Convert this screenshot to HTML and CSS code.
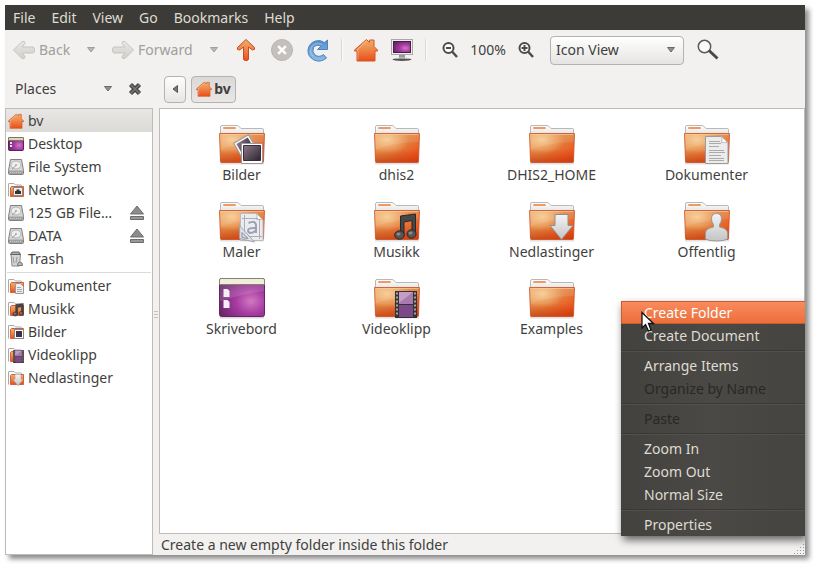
FILE: index.html
```
<!DOCTYPE html>
<html lang="en">
<head>
<meta charset="utf-8">
<title>bv - File Browser</title>
<link rel="stylesheet" href="styles.css">
</head>
<body>
<svg class="defs" width="0" height="0" aria-hidden="true">
  <defs>
    <linearGradient id="gFolder" x1="0" y1="0" x2="1" y2="1"><stop offset="0" stop-color="#eda35d"/><stop offset=".5" stop-color="#e27f3e"/><stop offset=".85" stop-color="#ee4e1a"/><stop offset="1" stop-color="#dc4514"/></linearGradient>
    <radialGradient id="gGlow" cx=".28" cy=".22" r=".5"><stop offset="0" stop-color="#f8d59c" stop-opacity=".85"/><stop offset="1" stop-color="#f8c58c" stop-opacity="0"/></radialGradient>
    <linearGradient id="gBase" x1="0" y1="0" x2="0" y2="1"><stop offset=".55" stop-color="#c8400c" stop-opacity="0"/><stop offset="1" stop-color="#c23b0c" stop-opacity=".7"/></linearGradient>
    <linearGradient id="gOrange" x1="0" y1="0" x2="0" y2="1"><stop offset="0" stop-color="#eeb070"/><stop offset=".5" stop-color="#ee8345"/><stop offset="1" stop-color="#ea4d1b"/></linearGradient>
    <linearGradient id="gTab" x1="0" y1="0" x2="0" y2="1"><stop offset="0" stop-color="#fff"/><stop offset="1" stop-color="#e4e4e4"/></linearGradient>
    <linearGradient id="gGrey" x1="0" y1="0" x2="0" y2="1"><stop offset="0" stop-color="#f4f4f4"/><stop offset="1" stop-color="#c4c4c4"/></linearGradient>
    <linearGradient id="gDull" x1="0" y1="0" x2="0" y2="1"><stop offset="0" stop-color="#e9e7e5"/><stop offset="1" stop-color="#d2cfcc"/></linearGradient>
    <linearGradient id="gPhoto" x1="0" y1="0" x2="1" y2="1"><stop offset="0" stop-color="#8d7888"/><stop offset="1" stop-color="#2c2431"/></linearGradient>
    <radialGradient id="gPurple" cx=".7" cy=".6" r=".75"><stop offset="0" stop-color="#d278c0"/><stop offset=".45" stop-color="#a63ba2"/><stop offset="1" stop-color="#672665"/></radialGradient>
    <linearGradient id="gBlue" x1="0" y1="0" x2="0" y2="1"><stop offset="0" stop-color="#5590cc"/><stop offset="1" stop-color="#8bbbe8"/></linearGradient>

    <symbol id="folder" viewBox="0 0 48 44">
      <path d="M2 41.500h44" stroke="#000" stroke-opacity=".12" stroke-width="2"/>
      <path d="M2.500 12V5q0-1.500 1.500-1.500h15q1.500 0 2.500 1.500l1.500 1.500h21.500q1 0 1 1.500v4z" fill="url(#gTab)" stroke="#b6b8b9"/>
      <rect x="5" y="5" width="13" height="2" rx="1" fill="#f09a62"/>
      <path d="M1.500 11.500h45l-1 28q0 1-1 1H3.500q-1 0-1-1z" fill="url(#gFolder)"/>
      <path d="M1.500 11.500h45l-1 28q0 1-1 1H3.500q-1 0-1-1z" fill="url(#gGlow)"/>
      <path d="M2 12h44v8Q22 20 2 28z" fill="#fff" opacity=".1"/>
      <path d="M1.500 11.500h45l-1 28q0 1-1 1H3.500q-1 0-1-1z" fill="url(#gBase)" stroke="#cc5124" stroke-opacity=".8"/>
      <path d="M2.500 12.500h43" stroke="#fbd0a0" stroke-opacity=".6"/>
    </symbol>
    <symbol id="folder16" viewBox="0 0 16 16">
      <path d="M.5 14.500V2Q.5 1.500 1 1.500h5l1.500 1.500H13q.5 0 .5 .5V6" fill="#fff" stroke="#a9a9a9"/>
      <path d="M3.500 4.500h12v10H2.500v-9z" fill="url(#gOrange)" stroke="#d65f33"/>
    </symbol>
    <symbol id="home" viewBox="0 0 24 24">
      <path d="M12.500 1.500l3 3V2h4.500v6.500l3.500 3.500v1H21v10H3V13H.5v-1z" fill="url(#gOrange)" stroke="#d4571f"/>
      <path d="M12.500 3L3 12.200h1v9.800" fill="none" stroke="#fff" stroke-opacity=".35"/>
    </symbol>
    <symbol id="desk" viewBox="0 0 16 16">
      <rect x=".5" y="1.500" width="15" height="13" rx="1" fill="url(#gPurple)" stroke="#5e1f60"/>
      <path d="M.5 4.500V2q0-.5 1-.5h13q1 0 1 .5v2.500z" fill="#d8d6bd" stroke="#7d7a5c"/>
      <path d="M2 6h2v2H2zM2 9h2v2H2z" fill="#f2e4f2"/>
    </symbol>
    <symbol id="disk" viewBox="0 0 16 16">
      <path d="M2.500 .5h11l2 11v3q0 1-1 1h-13q-1 0-1-1v-3z" fill="#d6d6d6" stroke="#808080"/>
      <path d="M1 11.500h14v3.500H1z" fill="#a2a2a2"/>
      <ellipse cx="8" cy="6" rx="5" ry="4" fill="#eee" stroke="#b4b4b4"/><circle cx="8" cy="6" r="1" fill="#aaa"/>
      <path d="M4 10l4-3.500" stroke="#a0a0a0"/><path d="M2 13.500h12" stroke="#c8c8c8" stroke-dasharray="1 1"/>
    </symbol>
    <symbol id="eject" viewBox="0 0 16 16">
      <path d="M8 1l6.500 8h-13z" fill="#8c8c8c" stroke="#6c6c6c"/><path d="M1.500 11.500h13v3h-13z" fill="#999" stroke="#6c6c6c"/>
    </symbol>
    <symbol id="note" viewBox="0 0 24 27">
      <path d="M7.500 2.500L22.500.5v20h-3.500V7L11 8.500V22H7.500z" fill="#474747" stroke="#292929"/>
      <ellipse cx="6.500" cy="21.500" rx="4.800" ry="4.200" fill="#555" stroke="#292929"/><ellipse cx="18.500" cy="20.500" rx="4.500" ry="4.200" fill="#555" stroke="#292929"/>
      <ellipse cx="5.500" cy="20.500" rx="2" ry="1.500" fill="#8a8a8a"/><ellipse cx="17.500" cy="19.500" rx="2" ry="1.500" fill="#8a8a8a"/>
    </symbol>
    <symbol id="film" viewBox="0 0 22 27">
      <path d="M0 0h22v27H0z" fill="#333"/>
      <path d="M4 1h14v12H4z" fill="#a77cad"/><path d="M4 14h14v12H4z" fill="#7c4a88"/><path d="M4 1h14L4 12z" fill="#d3b4d4" opacity=".6"/>
      <path d="M2 1.500v24M20 1.500v24" stroke="#ccc" stroke-width="1.500" stroke-dasharray="2 2"/>
    </symbol>
    <symbol id="down" viewBox="0 0 24 26">
      <path d="M5.500 .5h13v11h5L12 25.500.5 11.500h5z" fill="url(#gGrey)" stroke="#8f8f8f"/>
    </symbol>
    <symbol id="page" viewBox="0 0 24 28">
      <path d="M.5 .5h16l6.500 6.500v20.500H.5z" fill="#ececec" stroke="#9b9b9b"/><path d="M16.500 .5q1 3 0 6 3-.5 6.500 .5z" fill="#fff" stroke="#bbb"/>
      <path d="M4 5.500h11M4 7.500h12M4 10.500h10M4 14.500h15M4 16.500h16M4 19.500h12M4 22.500h15M4 24.500h15" stroke="#aaa"/>
    </symbol>
    <symbol id="caret" viewBox="0 0 8 6"><path d="M.5 .5h7L4 5z" fill="#8f8f8f" stroke="#6a6a6a"/></symbol>
  </defs>
</svg>

<div class="window">
  <nav class="menubar">
    <button>File</button><button>Edit</button><button>View</button><button>Go</button><button>Bookmarks</button><button>Help</button>
  </nav>

  <div class="toolbar">
    <button class="nav back" disabled><svg width="22" height="20" viewBox="0 0 22 20"><path d="M9 1.500q3-1 3 2L9 7h11q1.500 0 1.500 3T20 13H9l3 3.500q0 3-3 2L.5 10z" fill="url(#gDull)" stroke="#c6c3c0"/></svg>Back</button>
    <button class="drop dim" aria-label="Back history"><svg width="8" height="6"><use href="#caret"/></svg></button>
    <button class="nav forward" disabled><svg width="22" height="20" viewBox="0 0 22 20"><path d="M13 1.500q-3-1-3 2L13 7H2Q.5 7 .5 10T2 13h11l-3 3.500q0 3 3 2L21.500 10z" fill="url(#gDull)" stroke="#c6c3c0"/></svg>Forward</button>
    <button class="drop dim" aria-label="Forward history"><svg width="8" height="6"><use href="#caret"/></svg></button>
    <button class="tool" aria-label="Up"><svg width="20" height="24" viewBox="0 0 20 24"><path d="M10 1.500L1.500 9.500q-1 2.500 2 2.500L7.500 9v12q0 1.500 2.500 1.500t2.500-1.500V9l4 3q3 0 2-2.500z" fill="url(#gOrange)" stroke="#cc4a1c"/></svg></button>
    <button class="tool" aria-label="Stop" disabled><svg width="24" height="24" viewBox="0 0 24 24"><circle cx="12" cy="12" r="10.500" fill="#c3c0be" stroke="#b7b4b2"/><path d="M8.200 8.200l7.600 7.600m0-7.600l-7.600 7.600" stroke="#fff" stroke-width="2.500"/></svg></button>
    <button class="tool" aria-label="Reload"><svg width="24" height="24" viewBox="0 0 24 24"><path d="M18.500 4.500L21.500 2v9.500H11.500l3.500-3.500q-5-2-7.500 1.500-2 4 1.500 7.500 4 3 8.500-.5l3 3.500q-6 5-12.500 2-6.500-3.500-6-10 1-7 7.500-9 4.500-1.500 9 1.500z" fill="url(#gBlue)" stroke="#4a83be"/><path d="M16 6.500Q8 4 5.500 9.500t2 9" fill="none" stroke="#fff" stroke-opacity=".35"/></svg></button>
    <span class="sep"></span>
    <button class="tool" aria-label="Home"><svg width="24" height="24"><use href="#home"/></svg></button>
    <button class="tool" aria-label="Computer"><svg width="24" height="24" viewBox="0 0 24 24"><path d="M9 17h6v4H9z" fill="#999"/><ellipse cx="12" cy="21.500" rx="9.500" ry="1.500" fill="#555"/><path d="M4 20.500q8-2 16 0z" fill="#ddd"/><rect x="1.500" y="1.500" width="21" height="15" fill="#efefec" stroke="#a8a8a5"/><rect x="3.500" y="3.500" width="17" height="11" fill="url(#gPurple)" stroke="#4b1c4a"/></svg></button>
    <span class="sep"></span>
    <button class="tool zoom" aria-label="Zoom out"><svg width="18" height="18" viewBox="0 0 18 18"><circle cx="7.500" cy="7" r="5" fill="#fff" stroke="#4b4b48" stroke-width="2"/><path d="M5 7h5" stroke="#4b4b48" stroke-width="2"/><path d="M11.500 11l4.500 5" stroke="#4b4b48" stroke-width="2.500"/></svg></button>
    <span class="level">100%</span>
    <button class="tool zoom" aria-label="Zoom in"><svg width="18" height="18" viewBox="0 0 18 18"><circle cx="7.500" cy="7" r="5" fill="#fff" stroke="#4b4b48" stroke-width="2"/><path d="M4.500 7h6M7.500 4v6" stroke="#4b4b48" stroke-width="2"/><path d="M11.500 11l4.500 5" stroke="#4b4b48" stroke-width="2.500"/></svg></button>
    <div class="combo"><select aria-label="View mode"><option>Icon View</option></select><svg width="8" height="6"><use href="#caret"/></svg></div>
    <button class="tool search" aria-label="Search"><svg width="24" height="24" viewBox="0 0 24 24"><circle cx="8.500" cy="8.500" r="6.200" fill="#fafafa" stroke="#5a5a58" stroke-width="1.500"/><path d="M13 12.500l8.500 8" stroke="#484846" stroke-width="3"/></svg></button>
  </div>

  <div class="panes">
    <aside class="side">
      <div class="side-head">
        <button class="places">Places<svg width="8" height="6"><use href="#caret"/></svg></button>
        <button class="close" aria-label="Close side pane"><svg width="14" height="14" viewBox="0 0 14 14"><path d="M2.500 2.500l9 9m0-9l-9 9" stroke="#464644" stroke-width="4.500"/><path d="M2.500 2.500l9 9m0-9l-9 9" stroke="#777" stroke-width="1.500"/></svg></button>
      </div>
      <ul class="list">
        <li class="on"><svg width="16" height="16"><use href="#home"/></svg><span>bv</span></li>
        <li><svg width="16" height="16"><use href="#desk"/></svg><span>Desktop</span></li>
        <li><svg width="16" height="16"><use href="#disk"/></svg><span>File System</span></li>
        <li><svg width="16" height="16"><use href="#folder16"/><path d="M5.500 5.500h9v8h-9z" fill="#eee" stroke="#888"/><path d="M7 11V9h1.500V7.500h3V9H13v3H7z" fill="#333"/></svg><span>Network</span></li>
        <li><svg width="16" height="16"><use href="#disk"/></svg><span>125 GB File…</span><button aria-label="Eject 125 GB"><svg width="16" height="16"><use href="#eject"/></svg></button></li>
        <li><svg width="16" height="16"><use href="#disk"/></svg><span>DATA</span><button aria-label="Eject DATA"><svg width="16" height="16"><use href="#eject"/></svg></button></li>
        <li><svg width="16" height="16" viewBox="0 0 16 16"><path d="M3 3h9.500l-1 12H4z" fill="#d4d4d4" stroke="#8a8a8a"/><path d="M2.500 3.500L4 1h7l1.500 2.500z" fill="#aaa" stroke="#666"/><path d="M5 6l1 6m3-6l-1 6" stroke="#999"/><path d="M10 12q1.500-2 4 0l.5 2.500h-5z" fill="#bbb" stroke="#777"/></svg><span>Trash</span></li>
        <li class="rule" role="separator"></li>
        <li><svg width="16" height="16"><use href="#folder16"/><path d="M7.500 5.500h5l3 3v7h-8z" fill="#eee" stroke="#999"/><path d="M9 9.500h4M9 11.500h5M9 13.500h5" stroke="#aaa"/></svg><span>Dokumenter</span></li>
        <li><svg width="16" height="16"><use href="#folder16"/><use href="#note" x="4" y="2" width="12" height="14"/></svg><span>Musikk</span></li>
        <li><svg width="16" height="16"><use href="#folder16"/><path d="M6.500 5.500h9v9h-9z" fill="#fff" stroke="#888"/><path d="M8 7h6v6H8z" fill="#40314a"/></svg><span>Bilder</span></li>
        <li><svg width="16" height="16"><use href="#folder16"/><use href="#film" x="5" y="3" width="11" height="13"/></svg><span>Videoklipp</span></li>
        <li><svg width="16" height="16"><use href="#folder16"/><use href="#down" x="4" y="4" width="12" height="12"/></svg><span>Nedlastinger</span></li>
      </ul>
    </aside>

    <div class="splitter"><i></i><i></i><i></i></div>

    <main class="content">
      <div class="path">
        <button class="prev" aria-label="Scroll path left"><svg width="6" height="8" viewBox="0 0 6 8"><path d="M5.500 .5v7L1 4z" fill="#777" stroke="#555"/></svg></button>
        <button class="crumb"><svg width="16" height="16"><use href="#home"/></svg>bv</button>
      </div>
      <div class="view">
        <figure><svg width="48" height="44"><use href="#folder"/><g transform="rotate(-30 26 24)"><path d="M18.500 16.500h17v18h-17z" fill="#f7f7f7" stroke="#999"/><path d="M20.500 18.500h13v12h-13z" fill="url(#gPhoto)"/></g><path d="M23.500 21.500h21v20h-21z" fill="#fff" stroke="#999"/><path d="M25.500 23.500h17v15h-17z" fill="url(#gPhoto)" stroke="#3a2c38"/></svg><figcaption>Bilder</figcaption></figure>
        <figure><svg width="48" height="44"><use href="#folder"/></svg><figcaption>dhis2</figcaption></figure>
        <figure><svg width="48" height="44"><use href="#folder"/></svg><figcaption>DHIS2_HOME</figcaption></figure>
        <figure><svg width="48" height="44"><use href="#folder"/><use href="#page" x="22" y="14" width="24" height="28"/></svg><figcaption>Dokumenter</figcaption></figure>
        <figure><svg width="48" height="44"><use href="#folder"/><path d="M22.500 14.500h16l6.500 6.500v20.500h-22.500z" fill="#ececef" stroke="#b9bbc2"/><path d="M38.500 14.500q1 3 0 6 3-.5 6.500 .5z" fill="#fff" stroke="#b9bbc2"/><path d="M26.500 16v22M41.500 20v20M24 19.500h16M24 37.500h20" stroke="#a9aeba"/><path d="M30.500 24q7-3 7.500 2v8m0-5q-8-.5-8 2.500 1 5 8 0" fill="none" stroke="#9aa2b4" stroke-width="2"/><path d="M21.500 26.500v13l15 3.500z" fill="#dfe1e7" fill-opacity=".8" stroke="#9fa4b0"/><path d="M24 33.500v5l6 1z" fill="none" stroke="#878d9c"/></svg><figcaption>Maler</figcaption></figure>
        <figure><svg width="48" height="44"><use href="#folder"/><use href="#note" x="20" y="14" width="24" height="28"/></svg><figcaption>Musikk</figcaption></figure>
        <figure><svg width="48" height="44"><use href="#folder"/><use href="#down" x="21" y="15" width="25" height="26"/></svg><figcaption>Nedlastinger</figcaption></figure>
        <figure><svg width="48" height="44"><use href="#folder"/><path d="M33.500 14.500q5 0 5 5.500 0 3-2 5.500v2.500q8 1.500 8 6v6q-3 2-11 2t-11-2v-6q0-4.500 8-6v-2.500q-2-2.500-2-5.500 0-5.500 5-5.500z" fill="url(#gGrey)" stroke="#999"/></svg><figcaption>Offentlig</figcaption></figure>
        <figure><svg width="48" height="44" viewBox="0 0 48 44"><path d="M2 41.500h44" stroke="#000" stroke-opacity=".15" stroke-width="2"/><rect x="1.500" y="2.500" width="45" height="38" rx="2" fill="url(#gPurple)" stroke="#662467"/><path d="M2 9h44v6Q24 18 2 25z" fill="#fff" opacity=".13"/><path d="M1.500 8.500V4q0-1.500 1.500-1.500h42q1.500 0 1.500 1.500v4.500z" fill="#efeedd" stroke="#85836b"/><path d="M5.500 13h4l2 2v6h-6zM5.500 24h4l2 2v6h-6z" fill="#f5edf5"/></svg><figcaption>Skrivebord</figcaption></figure>
        <figure><svg width="48" height="44"><use href="#folder"/><use href="#film" x="22" y="15" width="22" height="27"/></svg><figcaption>Videoklipp</figcaption></figure>
        <figure><svg width="48" height="44"><use href="#folder"/></svg><figcaption>Examples</figcaption></figure>
      </div>
      <footer class="status"><span>Create a new empty folder inside this folder</span><svg width="12" height="12" viewBox="0 0 12 12"><path d="M10.500 1v11M7.500 4v8M4.500 7v5M1.500 10v2" stroke="#999" stroke-dasharray="1 2"/></svg></footer>
    </main>
  </div>

  <div class="context" role="menu">
    <button role="menuitem" class="hover">Create Folder</button>
    <button role="menuitem">Create Document</button>
    <hr>
    <button role="menuitem">Arrange Items</button>
    <button role="menuitem" disabled>Organize by Name</button>
    <hr>
    <button role="menuitem" disabled>Paste</button>
    <hr>
    <button role="menuitem">Zoom In</button>
    <button role="menuitem">Zoom Out</button>
    <button role="menuitem">Normal Size</button>
    <hr>
    <button role="menuitem">Properties</button>
    <svg class="pointer" width="14" height="22" viewBox="0 0 14 22"><path d="M1 1.500v15.500l3.500-3.500 3 6.500 2.500-1-2.500-6.500h5z" fill="#fff" stroke="#111" stroke-width="1.300"/></svg>
  </div>
</div>
</body>
</html>
```
FILE: styles.css
```
* { box-sizing: border-box; }

body {
  margin: 0;
  padding: 5px 9px 9px 5px;
  height: 100vh;
  background: #fff;
  color: #3f3f3d;
  font: 14px/20px "Noto Sans", "Open Sans", sans-serif;
}

svg { display: block; flex: none; }
.defs { position: absolute; }

button {
  margin: 0;
  padding: 0;
  border: 0;
  background: none;
  color: inherit;
  font: inherit;
}

.window {
  position: relative;
  display: flex;
  flex-direction: column;
  height: 100%;
  overflow: hidden;
  background: #f2f1f0;
  box-shadow: 4px 4px 5px rgba(0, 0, 0, .45);
}

.menubar {
  display: flex;
  gap: 16px;
  height: 25px;
  padding: 0 8px;
  background: #3c3b37;
  color: #dfdbd2;
}

/* Toolbar */
.toolbar {
  display: flex;
  align-items: center;
  height: 40px;
  padding-left: 8px;
}

.nav {
  display: flex;
  align-items: center;
  gap: 4px;
  height: 28px;
  color: #a09e9b;
}
.back { width: 69px; }
.forward { width: 93px; margin-left: 12px; }

.drop {
  display: flex;
  justify-content: center;
  width: 18px;
}
.dim { opacity: .6; }

.tool {
  display: flex;
  justify-content: center;
  width: 36px;
}
.drop + .tool { margin-left: 5px; }

.sep {
  width: 2px;
  height: 22px;
  margin: 0 5px;
  border-left: 1px solid #dad7d4;
  background: #fafafa;
}

.level { width: 40px; text-align: center; }

.combo {
  display: flex;
  align-items: center;
  width: 134px;
  height: 29px;
  margin-left: 6px;
  border: 1px solid #b5b2af;
  border-radius: 4px;
  background: linear-gradient(#fff, #f0efee 60%, #e6e4e2);
}
.combo select {
  flex: 1;
  height: 100%;
  padding: 0 5px;
  border: 0;
  appearance: none;
  background: none;
  color: inherit;
  font: inherit;
}
.combo svg { margin-right: 8px; }
.search { margin-left: 6px; }

/* Panes */
.panes {
  display: flex;
  flex: 1;
  min-height: 0;
}

.side {
  display: flex;
  flex-direction: column;
  width: 148px;
}

.side-head {
  display: flex;
  align-items: center;
  height: 38px;
  padding: 0 11px 0 10px;
}
.places {
  display: flex;
  flex: 1;
  align-items: center;
  justify-content: space-between;
}
.close { margin-left: 16px; }

.list {
  flex: 1;
  margin: 0;
  padding: 0;
  border: 1px solid #bfbbb8;
  background: #fff;
  list-style: none;
}
.list li {
  display: flex;
  align-items: center;
  gap: 4px;
  height: 23px;
  padding: 0 7px 0 2px;
}
.list span { flex: 1; white-space: nowrap; }
.list .on { background: linear-gradient(#e9e7e5, #dcdad7); }
.list .rule {
  height: 1px;
  margin: 2px 1px 1px;
  padding: 0;
  background: #dddbd9;
}

.splitter {
  display: flex;
  flex-direction: column;
  align-items: center;
  justify-content: center;
  gap: 2px;
  width: 6px;
  padding-top: 38px;
  padding-bottom: 34px;
}
.splitter i {
  width: 4px;
  height: 1px;
  background: #c3c0bd;
}

.content {
  display: flex;
  flex: 1;
  flex-direction: column;
  min-width: 0;
}

.path {
  display: flex;
  align-items: center;
  gap: 5px;
  height: 38px;
  padding-left: 5px;
}
.path button {
  display: flex;
  align-items: center;
  justify-content: center;
  gap: 2px;
  height: 27px;
  border: 1px solid #b5b2af;
  border-radius: 4px;
  background: linear-gradient(#fdfdfd, #e8e6e4);
}
.path .prev { width: 22px; }
.path .crumb {
  width: 45px;
  background: linear-gradient(#dbd9d7, #e9e7e6);
  font-weight: 700;
}

.view {
  display: grid;
  flex: 1;
  grid-template-columns: repeat(auto-fill, 155px);
  grid-auto-rows: 77px;
  padding: 13px 0 0 4px;
  border: 1px solid #bfbbb8;
  background: #fff;
}
figure {
  display: flex;
  flex-direction: column;
  align-items: center;
  margin: 0;
}
figcaption { line-height: 18px; }

.status {
  display: flex;
  align-items: center;
  justify-content: space-between;
  height: 21px;
  padding-left: 2px;
}
.status svg { align-self: flex-end; }

/* Context menu */
.context {
  position: absolute;
  right: 0;
  bottom: 19px;
  width: 184px;
  background: linear-gradient(90deg, #43423e, #4a4945 50%, #454440);
  box-shadow: 2px 4px 8px rgba(0, 0, 0, .6);
  color: #dfdbd2;
}
.context button {
  display: block;
  width: 100%;
  height: 23px;
  padding-left: 23px;
  text-align: left;
}
.context .hover {
  border: 1px solid #cb5a2f;
  border-right: 0;
  padding-left: 22px;
  background: linear-gradient(#f98a5c, #ec6f3c);
  color: #fff;
  line-height: 19px;
}
.context button:disabled { color: #292825; }
.context hr {
  height: 2px;
  margin: 3px 0 2px;
  border: 0;
  border-top: 1px solid #3a3935;
  background: #52514d;
}
.pointer {
  position: absolute;
  top: 10px;
  left: 20px;
}
```
